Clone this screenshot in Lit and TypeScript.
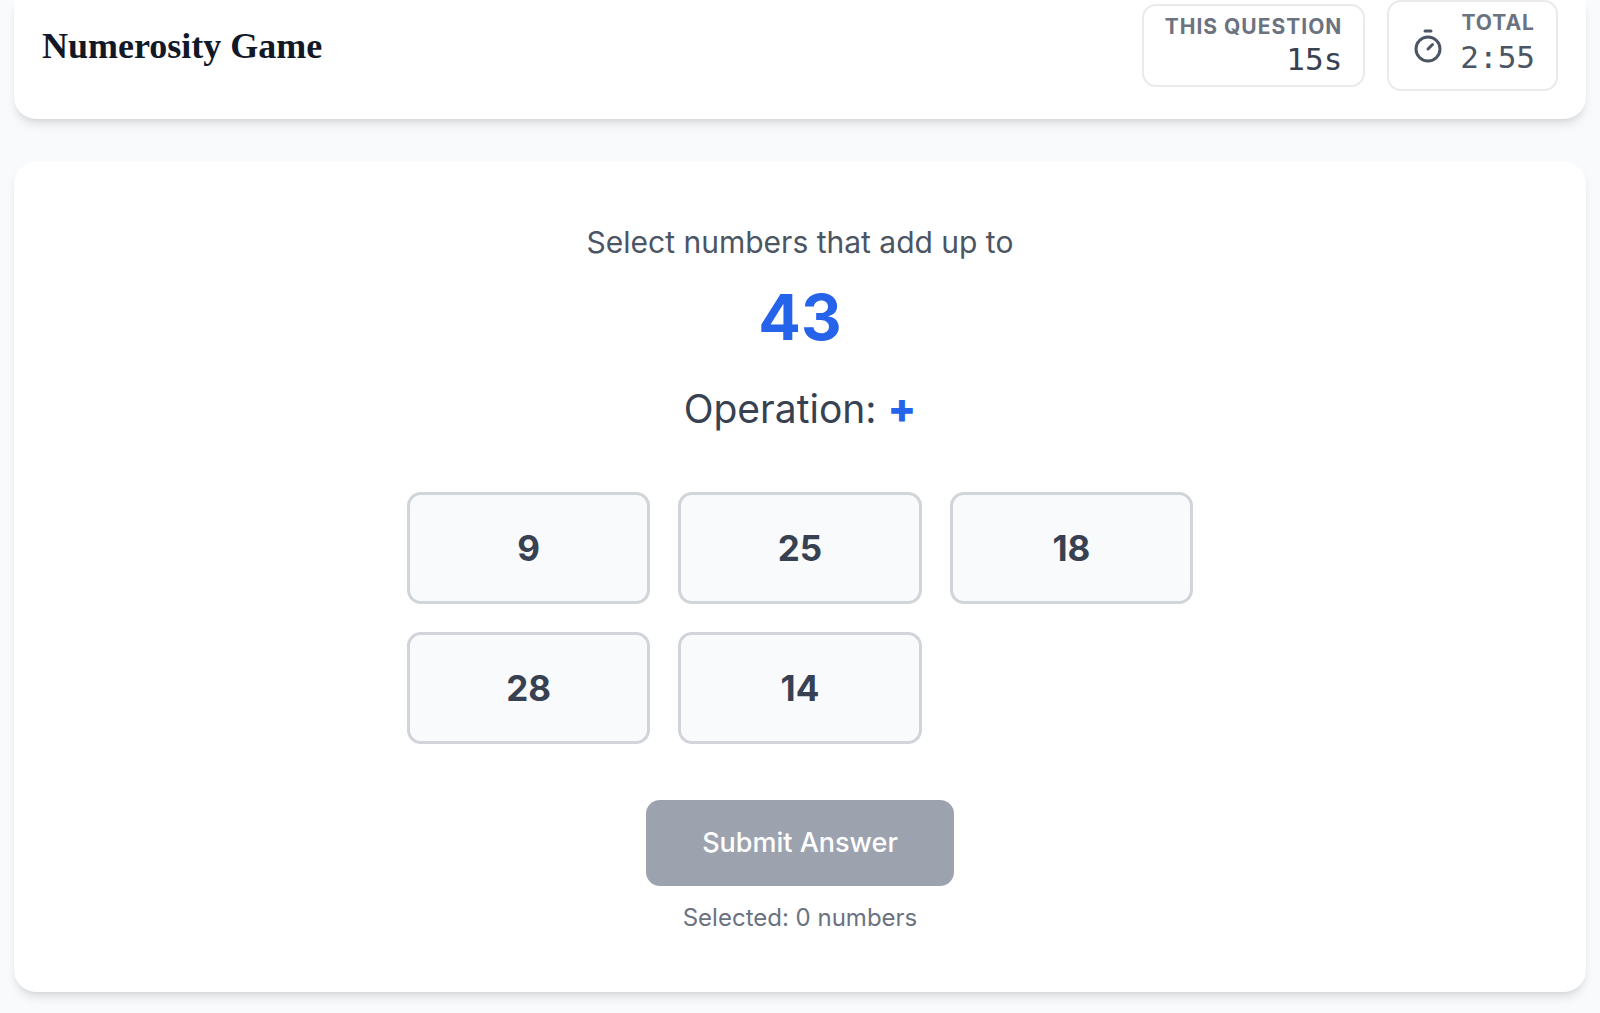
import { LitElement, html, css } from "lit";
import { customElement, property, state } from "lit/decorators.js";
import { classMap } from "lit/directives/class-map.js";

@customElement("game-header")
class GameHeader extends LitElement {
  static styles = css`
    :host {
      display: block;
    }
    .bar {
      display: flex;
      align-items: center;
      justify-content: space-between;
      gap: 28px;
      padding: 0 28px 28px;
      background: #ffffff;
      border-radius: 0 0 22px 22px;
      box-shadow: 0 7px 11px -2px rgba(0, 0, 0, 0.1), 0 4px 7px -4px rgba(0, 0, 0, 0.1);
    }
    .title {
      margin: 0;
      font-family: "Liberation Serif", serif;
      font-size: 36px;
      line-height: 48px;
      font-weight: 700;
      color: #111827;
    }
    .timers {
      display: flex;
      align-items: center;
      gap: 22px;
    }
    .timer {
      display: flex;
      align-items: center;
      gap: 14px;
      box-sizing: border-box;
      padding: 7px 21px;
      border: 2px solid #e9eaec;
      border-radius: 14px;
      color: #4b5563;
    }
    .total .readout {
      padding-bottom: 5px;
    }
    .question {
      color: #374151;
    }
    .question .value {
      line-height: 37px;
    }
    .readout {
      display: flex;
      flex-direction: column;
      align-items: flex-end;
    }
    .label {
      font-size: 21px;
      line-height: 28px;
      font-weight: 700;
      letter-spacing: 1px;
      text-transform: uppercase;
      color: #6b7280;
    }
    .value {
      font-family: "DejaVu Sans Mono", monospace;
      font-size: 31px;
      line-height: 40px;
    }
    .icon {
      width: 36px;
      height: 36px;
      fill: none;
      stroke: currentColor;
      stroke-width: 2;
      stroke-linecap: round;
      stroke-linejoin: round;
    }
  `;

  @property({ type: Number }) question = 0;
  @property({ type: Number }) total = 0;

  render() {
    const minutes = Math.floor(this.total / 60);
    const seconds = String(this.total % 60).padStart(2, "0");
    return html`
      <header class="bar">
        <h1 class="title">Numerosity Game</h1>
        <div class="timers">
          <div class="timer question">
            <div class="readout">
              <span class="label">This question</span>
              <span class="value">${this.question}s</span>
            </div>
          </div>
          <div class="timer total">
            <svg class="icon" viewBox="0 0 24 24" aria-hidden="true">
              <line x1="10" y1="2" x2="14" y2="2"></line>
              <line x1="12" y1="14" x2="15" y2="11"></line>
              <circle cx="12" cy="14" r="8"></circle>
            </svg>
            <div class="readout">
              <span class="label">Total</span>
              <span class="value">${minutes}:${seconds}</span>
            </div>
          </div>
        </div>
      </header>
    `;
  }
}

@customElement("app-root")
class AppRoot extends LitElement {
  static styles = css`
    :host {
      display: block;
      box-sizing: border-box;
      min-height: 100vh;
      padding: 0 14px 21px;
      background: #f9fafc;
      font-family: Inter, "Liberation Sans", sans-serif;
    }
    .card {
      display: flex;
      flex-direction: column;
      align-items: center;
      margin-top: 43px;
      padding: 56px;
      background: #ffffff;
      border-radius: 22px;
      box-shadow: 0 7px 11px -2px rgba(0, 0, 0, 0.1), 0 4px 7px -4px rgba(0, 0, 0, 0.1);
    }
    .prompt {
      margin: 0;
      font-size: 30px;
      line-height: 48px;
      color: #4b5563;
    }
    .target {
      margin: 14px 0 0;
      font-size: 63px;
      line-height: 74px;
      font-weight: 700;
      color: #2563eb;
    }
    .operation {
      margin: 28px 0 0;
      font-size: 39px;
      line-height: 54px;
      color: #374151;
    }
    .sign {
      font-size: 42px;
      line-height: 48px;
      font-weight: 800;
      color: #2563eb;
    }
    .numbers {
      display: grid;
      grid-template-columns: repeat(3, 1fr);
      gap: 28px;
      width: 100%;
      max-width: 786px;
      margin-top: 56px;
    }
    .number {
      padding: 29px;
      border: 3px solid #d1d4d8;
      border-radius: 14px;
      background: #f9fafc;
      font-family: inherit;
      font-size: 35px;
      line-height: 48px;
      font-weight: 700;
      color: #374151;
      cursor: pointer;
    }
    .picked {
      border-color: #2563eb;
      background: #dbeafe;
    }
    .submit {
      margin-top: 56px;
      padding: 19px 56px;
      border: 0;
      border-radius: 14px;
      background: #2563eb;
      font-family: inherit;
      font-size: 27px;
      line-height: 48px;
      font-weight: 500;
      color: #ffffff;
      cursor: pointer;
    }
    .submit:disabled {
      background: #9ca3af;
      cursor: not-allowed;
    }
    .count {
      margin: 14px 0 0;
      font-size: 24px;
      line-height: 36px;
      color: #6b7280;
    }
  `;

  @state() private picked = new Set<number>();

  private numbers = [9, 25, 18, 28, 14];

  private toggle(index: number) {
    const next = new Set(this.picked);
    if (!next.delete(index)) next.add(index);
    this.picked = next;
  }

  render() {
    return html`
      <game-header question="15" total="175"></game-header>
      <main class="card">
        <p class="prompt">Select numbers that add up to</p>
        <p class="target">43</p>
        <p class="operation">Operation: <span class="sign">+</span></p>
        <div class="numbers">
          ${this.numbers.map(
            (n, i) => html`<button
              type="button"
              class=${classMap({ number: true, picked: this.picked.has(i) })}
              aria-pressed=${this.picked.has(i) ? "true" : "false"}
              @click=${() => this.toggle(i)}
            >${n}</button>`
          )}
        </div>
        <button type="button" class="submit" ?disabled=${this.picked.size === 0}>Submit Answer</button>
        <p class="count">Selected: ${this.picked.size} numbers</p>
      </main>
    `;
  }
}
